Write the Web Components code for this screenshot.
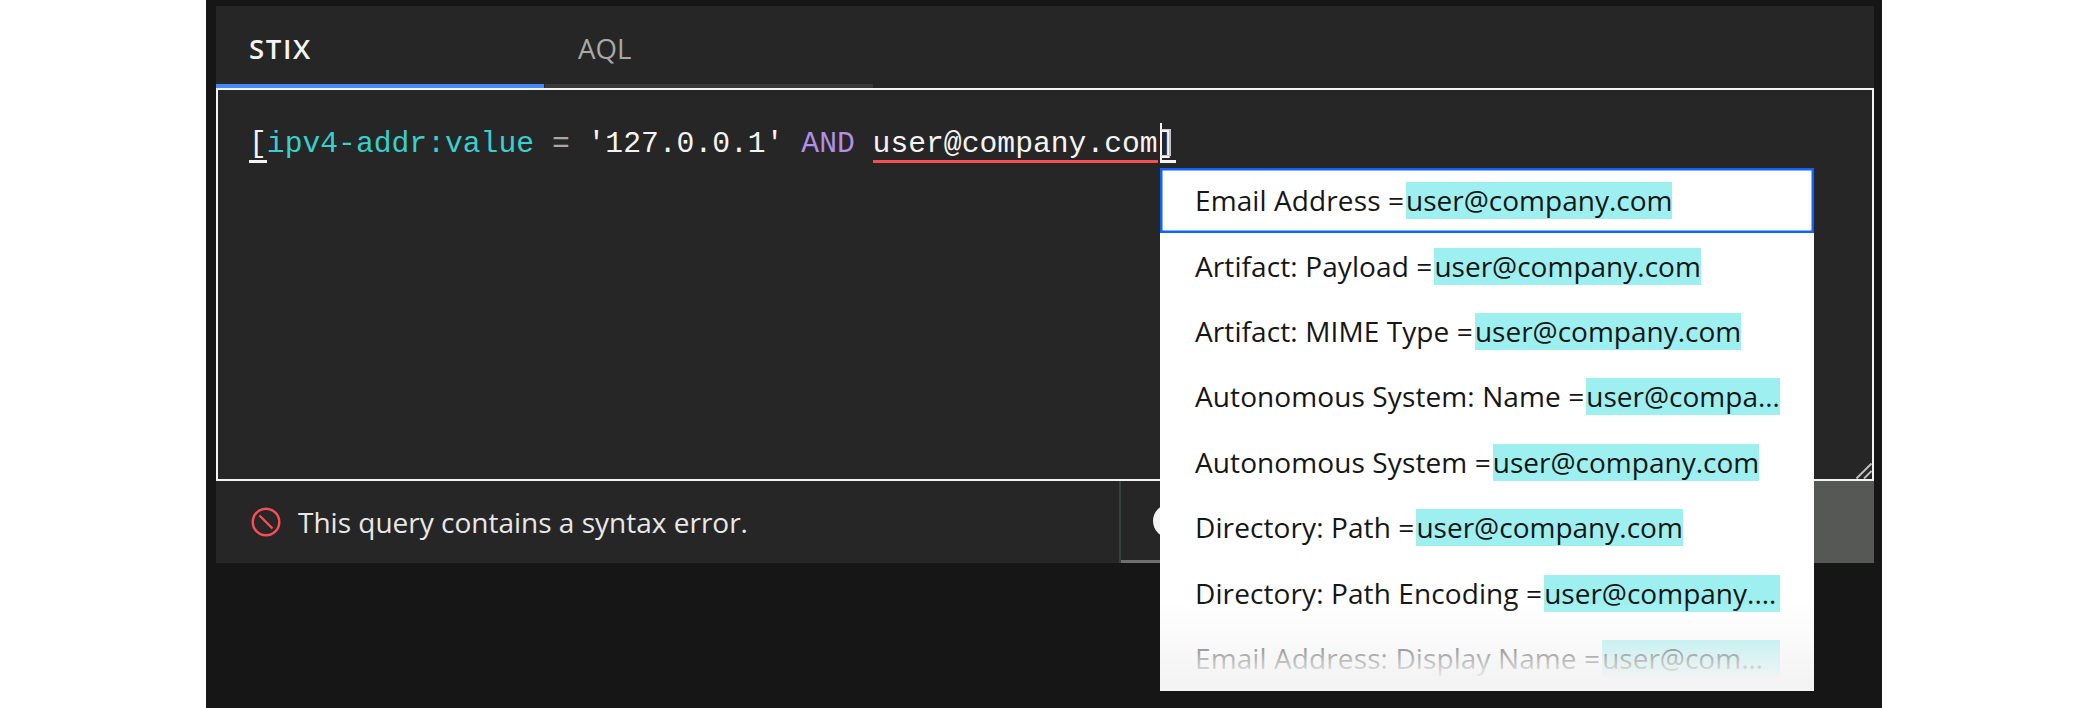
<!DOCTYPE html>
<html lang="en"><head><meta charset="utf-8"><title>Query</title>
<style>
html,body{margin:0;background:#fff;height:708px;overflow:hidden}
body{font-family:"Open Sans","Liberation Sans",sans-serif}
</style></head><body>
<query-app>
  <query-tabs slot="tabs">
    <query-tab active>STIX</query-tab>
    <query-tab>AQL</query-tab>
  </query-tabs>
  <code-editor slot="editor"></code-editor>
  <status-bar slot="status">This query contains a syntax error.</status-bar>
  <suggestion-list slot="popup">
    <suggestion-item selected label="Email Address =" value="user@company.com"></suggestion-item>
    <suggestion-item label="Artifact: Payload =" value="user@company.com"></suggestion-item>
    <suggestion-item label="Artifact: MIME Type =" value="user@company.com"></suggestion-item>
    <suggestion-item label="Autonomous System: Name =" value="user@company.com"></suggestion-item>
    <suggestion-item label="Autonomous System =" value="user@company.com"></suggestion-item>
    <suggestion-item label="Directory: Path =" value="user@company.com"></suggestion-item>
    <suggestion-item label="Directory: Path Encoding =" value="user@company.com"></suggestion-item>
    <suggestion-item label="Email Address: Display Name =" value="user@company.com"></suggestion-item>
  </suggestion-list>
</query-app>
<script>
const SANS='"Open Sans","Liberation Sans",sans-serif';
function def(name,html,extra){
  const t=document.createElement('template');t.innerHTML=html;
  customElements.define(name,class extends HTMLElement{
    constructor(){super();this.attachShadow({mode:'open'}).appendChild(t.content.cloneNode(true));}
    connectedCallback(){if(extra)extra(this);}
  });
}
def('query-app',`<style>
:host{display:block;box-sizing:border-box;margin-left:206px;width:1676px;height:708px;background:#161616;padding:6px 8px 0 10px}
.card{position:relative;background:#262626;height:557px;display:flex;flex-direction:column}
.popup{position:absolute;left:944px;top:162px}
</style><div class="card"><slot name="tabs"></slot><slot name="editor"></slot><slot name="status"></slot><div class="popup"><slot name="popup"></slot></div></div>`);
def('query-tabs',`<style>:host{display:flex;height:82px;gap:1px}</style><slot></slot>`);
def('query-tab',`<style>
:host{display:block;box-sizing:border-box;width:328px;height:82px;padding:19px 0 0 33px;border-bottom:4px solid #393939;color:#a8a8a8;font:400 27.6px/46px ${SANS}}
:host([active]){border-bottom-color:#4589ff;color:#f4f4f4;font-weight:600;letter-spacing:1.6px}
</style><slot></slot>`);
def('code-editor',`<style>
:host{display:block;box-sizing:border-box;height:393px;border:2px solid #f4f4f4;position:relative;padding:34px 0 0 31px;font:400 29.7px/40px "Liberation Mono","DejaVu Sans Mono",monospace;color:#f4f4f4;white-space:pre}
.line{display:block}
.k{color:#39cfcd}.o{color:#a8a8a8}.p{color:#b08fe8}
.mark{position:relative}
.mark::after{content:"";position:absolute;left:0;right:0;top:33px;height:3px;background:var(--u)}
.caret{position:absolute;left:942px;top:33px;width:2px;height:38px;background:#f4f4f4}
.box{position:absolute;left:943px;top:39px;width:9px;height:25px;border:1.5px solid #c6c6c6;border-left:0}
.under{position:absolute;left:942px;top:70px;width:16px;height:3px;background:#f4f4f4}
.grip{position:absolute;right:0;bottom:0;display:block}
</style><span class="line"><span class="mark" style="--u:#f4f4f4">[</span><span class="k">ipv4-addr:value</span> <span class="o">=</span> '127.0.0.1' <span class="p">AND</span> <span class="mark" style="--u:#fa4d56">user@company.com</span>]</span>
<i class="caret"></i><i class="box"></i><i class="under"></i>
<svg class="grip" width="16" height="16" viewBox="0 0 16 16"><path d="M0.5 15.5 15.5 0.5M8 15.5 15.5 8" stroke="#bdbdbd" stroke-width="2" fill="none"/></svg>`);
def('status-bar',`<style>
:host{display:flex;height:82px;align-items:stretch;color:#e8e8e8;font:400 28px/36px ${SANS}}
.msg{flex:0 0 903px;box-sizing:border-box;display:flex;align-items:center;gap:17px;padding:0 0 0 35px}
svg{flex:none}
.toggle{flex:1;border-left:2px solid #393f3e;display:flex;flex-direction:column}
.tin{flex:1;display:flex;align-items:center;padding-left:32px;border-bottom:3px solid #6f6f6f;min-height:0;box-sizing:border-box}
.dot{width:34px;height:34px;border-radius:50%;background:#f4f4f4}
.run{flex:0 0 60px;background:#565856}
</style><div class="msg"><svg width="30" height="30" viewBox="0 0 30 30"><circle cx="15" cy="15" r="13.3" fill="none" stroke="#fa4d56" stroke-width="2.4"/><path d="M8.5 8.5 21.5 21.5" stroke="#fa4d56" stroke-width="2.4"/></svg><span><slot></slot></span></div><div class="toggle"><div class="tin"><div class="dot"></div></div></div><div class="run"></div>`);
def('suggestion-list',`<style>
:host{display:block;position:relative;width:654px;background:#fff}
.fade{position:absolute;left:0;right:0;bottom:0;height:89px;background:linear-gradient(rgba(244,244,244,0),#f4f4f4 88%);pointer-events:none}
</style><slot></slot><div class="fade"></div>`);
def('suggestion-item',`<style>
:host{display:flex;box-sizing:border-box;height:65.4px;padding:0 34px 0 35px;align-items:center;color:#161616;font:400 28px/37px ${SANS};white-space:nowrap}
:host([selected]){box-shadow:inset 0 0 0 2.5px #0f62fe}
.l{flex:none;letter-spacing:.1px}
.v{flex:0 1 auto;min-width:0;overflow:hidden;text-overflow:ellipsis;background:#9ef0f0;margin-left:2px;height:37px}
</style><span class="l"></span><span class="v"></span>`,el=>{
  el.shadowRoot.querySelector('.l').textContent=el.getAttribute('label');
  el.shadowRoot.querySelector('.v').textContent=el.getAttribute('value');
});
</script></body></html>
